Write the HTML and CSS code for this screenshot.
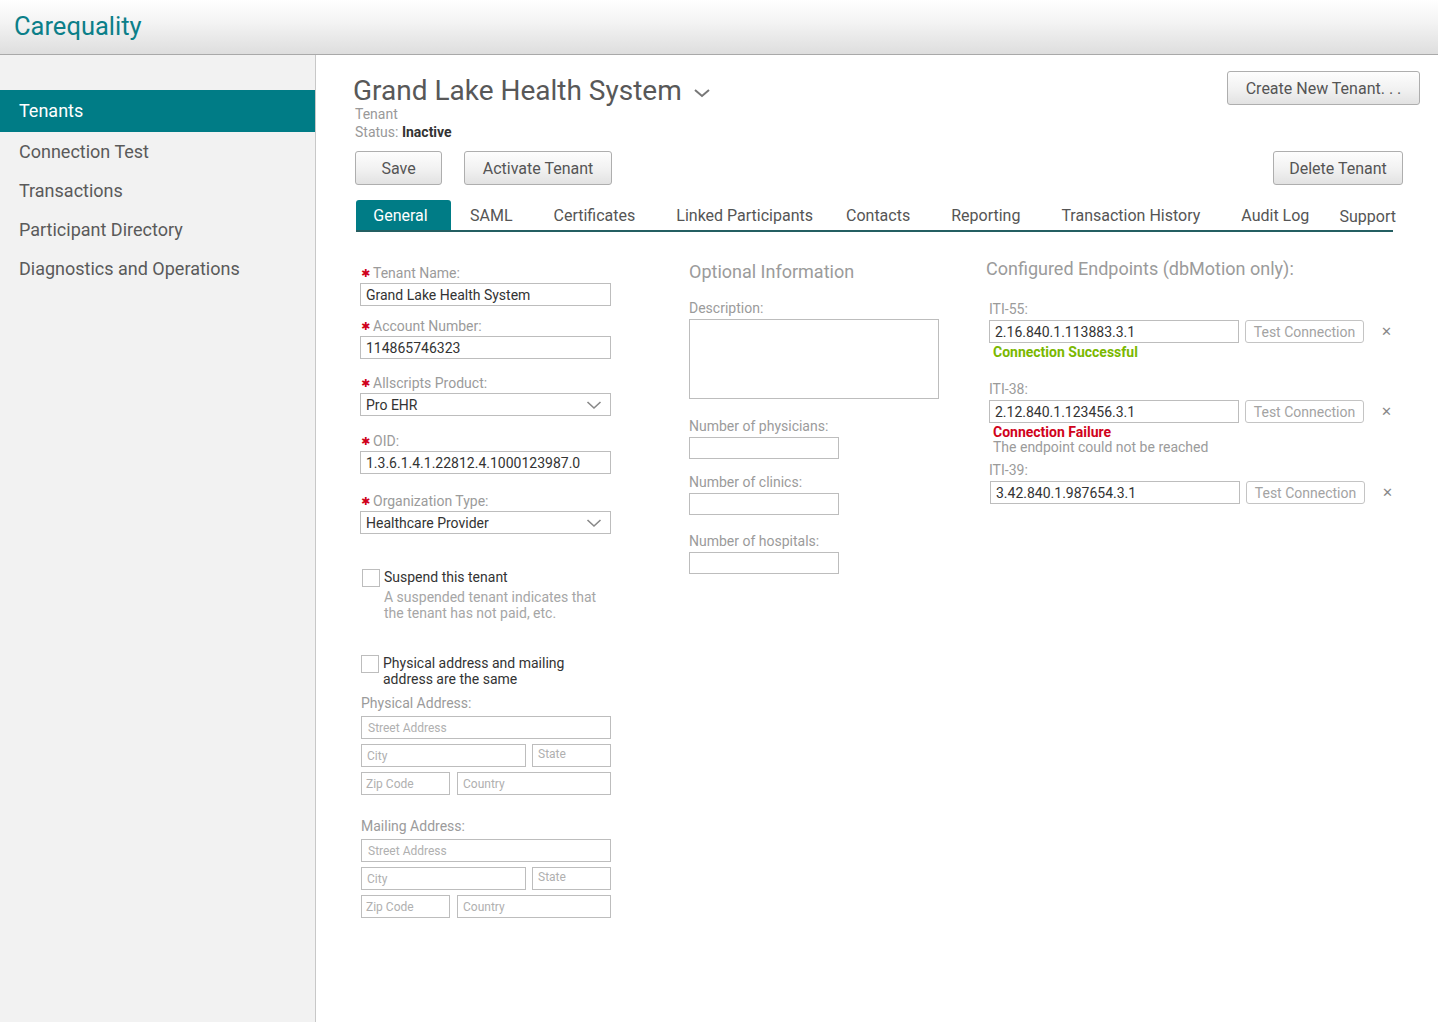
FILE: index.html
```html
<!DOCTYPE html>
<html>
<head>
<meta charset="utf-8">
<title>Carequality</title>
<link rel="stylesheet" href="styles.css">
</head>
<body>
<header class="topbar">
  <div class="brand">Carequality</div>
</header>
<div class="layout">
  <nav class="sidebar">
    <a class="nav-item active">Tenants</a>
    <a class="nav-item">Connection Test</a>
    <a class="nav-item">Transactions</a>
    <a class="nav-item">Participant Directory</a>
    <a class="nav-item">Diagnostics and Operations</a>
  </nav>
  <main class="main">
    <div class="title-row">
      <div class="title-block">
        <h1 class="page-title">Grand Lake Health System
          <svg class="title-chev" width="18" height="12" viewBox="0 0 18 12"><path d="M2 3 L9 9 L16 3" fill="none" stroke="#777" stroke-width="2"/></svg>
        </h1>
        <div class="subtitle">Tenant</div>
        <div class="status">Status: <b>Inactive</b></div>
      </div>
      <button class="btn btn-create">Create New Tenant. . .</button>
    </div>
    <div class="action-row">
      <button class="btn btn-save">Save</button>
      <button class="btn btn-activate">Activate Tenant</button>
      <button class="btn btn-delete">Delete Tenant</button>
    </div>
    <div class="tabs">
      <span class="tab active">General</span>
      <span class="tab">SAML</span>
      <span class="tab">Certificates</span>
      <span class="tab">Linked Participants</span>
      <span class="tab tab-contacts">Contacts</span>
      <span class="tab">Reporting</span>
      <span class="tab">Transaction History</span>
      <span class="tab">Audit Log</span>
      <span class="tab tab-support">Support</span>
    </div>
    <div class="form-area">
      <section class="col col-general">
        <div class="field f1">
          <label class="lbl"><span class="req">✱</span>Tenant Name:</label>
          <div class="input">Grand Lake Health System</div>
        </div>
        <div class="field f2">
          <label class="lbl"><span class="req">✱</span>Account Number:</label>
          <div class="input">114865746323</div>
        </div>
        <div class="field f3">
          <label class="lbl"><span class="req">✱</span>Allscripts Product:</label>
          <div class="input select">Pro EHR
            <svg class="sel-chev" width="16" height="10" viewBox="0 0 16 10"><path d="M1.5 2 L8 8 L14.5 2" fill="none" stroke="#888" stroke-width="1.6"/></svg>
          </div>
        </div>
        <div class="field f4">
          <label class="lbl"><span class="req">✱</span>OID:</label>
          <div class="input">1.3.6.1.4.1.22812.4.1000123987.0</div>
        </div>
        <div class="field f5">
          <label class="lbl"><span class="req">✱</span>Organization Type:</label>
          <div class="input select">Healthcare Provider
            <svg class="sel-chev" width="16" height="10" viewBox="0 0 16 10"><path d="M1.5 2 L8 8 L14.5 2" fill="none" stroke="#888" stroke-width="1.6"/></svg>
          </div>
        </div>

        <div class="check-row check-suspend">
          <span class="checkbox"></span>
          <div class="check-text">
            <div class="check-label">Suspend this tenant</div>
            <div class="check-desc">A suspended tenant indicates that the tenant has not paid, etc.</div>
          </div>
        </div>

        <div class="check-row check-same">
          <span class="checkbox"></span>
          <div class="check-text">
            <div class="check-label">Physical address and mailing address are the same</div>
          </div>
        </div>

        <div class="addr-group">
          <div class="addr-title">Physical Address:</div>
          <div class="addr-input full">Street Address</div>
          <div class="addr-line">
            <div class="addr-input city">City</div>
            <div class="addr-input state">State</div>
          </div>
          <div class="addr-line">
            <div class="addr-input zip">Zip Code</div>
            <div class="addr-input country">Country</div>
          </div>
        </div>

        <div class="addr-group mailing">
          <div class="addr-title">Mailing Address:</div>
          <div class="addr-input full">Street Address</div>
          <div class="addr-line">
            <div class="addr-input city">City</div>
            <div class="addr-input state">State</div>
          </div>
          <div class="addr-line">
            <div class="addr-input zip">Zip Code</div>
            <div class="addr-input country">Country</div>
          </div>
        </div>
      </section>

      <section class="col col-optional">
        <h2 class="col-heading">Optional Information</h2>
        <label class="opt-lbl desc-lbl">Description:</label>
        <div class="textarea"></div>
        <label class="opt-lbl phys-lbl">Number of physicians:</label>
        <div class="small-input"></div>
        <label class="opt-lbl clin-lbl">Number of clinics:</label>
        <div class="small-input"></div>
        <label class="opt-lbl hosp-lbl">Number of hospitals:</label>
        <div class="small-input"></div>
      </section>

      <section class="col col-endpoints">
        <h2 class="col-heading ep-heading">Configured Endpoints (dbMotion only):</h2>
        <div class="endpoint ep1">
          <label class="ep-lbl">ITI-55:</label>
          <div class="ep-row">
            <div class="ep-input">2.16.840.1.113883.3.1</div>
            <button class="test-btn">Test Connection</button>
            <span class="remove">✕</span>
          </div>
          <div class="ep-ok">Connection Successful</div>
        </div>
        <div class="endpoint ep2">
          <label class="ep-lbl">ITI-38:</label>
          <div class="ep-row">
            <div class="ep-input">2.12.840.1.123456.3.1</div>
            <button class="test-btn">Test Connection</button>
            <span class="remove">✕</span>
          </div>
          <div class="ep-fail">Connection Failure</div>
          <div class="ep-fail-desc">The endpoint could not be reached</div>
        </div>
        <div class="endpoint ep3">
          <label class="ep-lbl">ITI-39:</label>
          <div class="ep-row">
            <div class="ep-input">3.42.840.1.987654.3.1</div>
            <button class="test-btn">Test Connection</button>
            <span class="remove">✕</span>
          </div>
        </div>
      </section>
    </div>
  </main>
</div>
</body>
</html>
```
FILE: styles.css
```css
* { box-sizing: border-box; }
html, body { margin: 0; padding: 0; }
body {
  font-family: Roboto, "Liberation Sans", Arial, sans-serif;
  color: #555;
  background: #fff;
  width: 1438px;
  height: 1022px;
  overflow: hidden;
}

.topbar {
  height: 55px;
  border-bottom: 1px solid #a9a9a9;
  background: linear-gradient(to bottom, #ffffff 0%, #f4f4f4 40%, #dedede 100%);
  display: flex;
  align-items: center;
  padding-left: 14px;
}
.brand {
  font-size: 25.5px;
  color: #0b7f89;
  margin-top: -2px;
}

.layout {
  display: flex;
  height: 967px;
}

.sidebar {
  width: 316px;
  flex: 0 0 316px;
  background: #f2f2f2;
  border-right: 1px solid #c8c8c8;
  padding-top: 35px;
  display: flex;
  flex-direction: column;
}
.nav-item {
  display: flex;
  align-items: center;
  height: 39px;
  padding-left: 19px;
  font-size: 18px;
  color: #5a5a5a;
}
.nav-item.active {
  height: 42px;
  background: #007c86;
  color: #fff;
  padding-bottom: 2px;
}

.main {
  flex: 1;
  padding: 0 0 0 38px;
  position: relative;
}

.title-row {
  display: flex;
  justify-content: space-between;
  align-items: flex-start;
  padding-top: 21px;
}
.page-title {
  margin: 0;
  font-size: 28px;
  font-weight: 400;
  line-height: 29px;
  color: #585858;
  display: flex;
  align-items: center;
  margin-left: -1px;
}
.title-chev { margin-left: 11px; margin-top: 4px; }
.subtitle {
  font-size: 14px;
  line-height: 18px;
  color: #999;
  margin-left: 1px;
}
.status {
  font-size: 14px;
  line-height: 18px;
  color: #999;
  margin-left: 1px;
}
.status b { color: #333; font-weight: 700; }

.btn {
  font-family: Roboto, "Liberation Sans", Arial, sans-serif;
  font-size: 16px;
  color: #555;
  height: 34px;
  border: 1px solid #aeaeae;
  border-radius: 3px;
  background: linear-gradient(to bottom, #fdfdfd 0%, #f1f1f1 55%, #e2e2e2 100%);
  padding: 0;
}
.btn-create {
  width: 193px;
  margin-top: -5px;
  margin-right: 18px;
}
.action-row {
  display: flex;
  margin-top: 10px;
  margin-right: 35px;
}
.btn-save { width: 87px; margin-left: 1px; }
.btn-activate { width: 148px; margin-left: 22px; }
.btn-delete { width: 130px; margin-left: auto; }

.tabs {
  display: flex;
  align-items: flex-end;
  margin-top: 15px;
  margin-left: 2px;
  margin-right: 45px;
  border-bottom: 2px solid #245f62;
  height: 32px;
}
.tab {
  font-size: 16px;
  color: #555;
  padding: 0 20px 5px 21px;
  white-space: nowrap;
}
.tab-contacts { padding-left: 13px; }
.tab.active {
  background: #007c86;
  color: #fff;
  height: 30px;
  width: 95px;
  padding: 0 6px 0 0;
  display: flex;
  align-items: center;
  justify-content: center;
  border-radius: 3px 3px 0 0;
  margin-right: -2px;
}
.tab-support {
  margin-left: auto;
  padding: 0 0 4px 0;
  margin-right: -3px;
}

.form-area {
  display: flex;
  padding-top: 30px;
}
.col-general { width: 251px; margin-left: 6px; margin-top: 2px; }
.col-optional { width: 250px; margin-left: 78px; }
.col-endpoints { width: 420px; margin-left: 47px; }

.field { display: flex; flex-direction: column; }
.f2 { margin-top: 11px; }
.f3 { margin-top: 15px; }
.f4 { margin-top: 16px; }
.f5 { margin-top: 18px; }
.lbl {
  font-size: 14px;
  line-height: 18px;
  height: 18px;
  color: #9b9b9b;
  display: flex;
  align-items: center;
  margin-bottom: 1px;
}
.req {
  color: #d0021b;
  font-size: 11px;
  line-height: 10px;
  width: 13px;
  padding-left: 1px;
  font-family: "DejaVu Sans", sans-serif;
  margin-top: 2px;
}
.input {
  height: 23px;
  border: 1px solid #bdbdbd;
  font-size: 14px;
  color: #333;
  padding-left: 5px;
  display: flex;
  align-items: center;
  position: relative;
}
.select .sel-chev {
  position: absolute;
  right: 8px;
  top: 6px;
}

.check-row {
  display: flex;
  align-items: flex-start;
}
.check-suspend { margin-top: 35px; margin-left: 2px; }
.check-same { margin-top: 34px; margin-left: 1px; }
.checkbox {
  width: 18px;
  height: 18px;
  border: 1px solid #bdbdbd;
  background: #fff;
  flex: 0 0 18px;
}
.check-text { margin-left: 4px; margin-top: 0; }
.check-label {
  font-size: 14px;
  line-height: 16px;
  color: #333;
}
.check-desc {
  font-size: 14px;
  line-height: 16px;
  color: #a6a6a6;
  margin-top: 4px;
  width: 225px;
}

.addr-group { margin-top: 7px; margin-left: 1px; }
.addr-group.mailing { margin-top: 22px; }
.addr-title {
  font-size: 14px;
  line-height: 18px;
  color: #9b9b9b;
  margin-bottom: 4px;
}
.addr-input {
  height: 23px;
  border: 1px solid #bdbdbd;
  font-size: 12px;
  color: #b0b0b0;
  padding-left: 6px;
  display: flex;
  align-items: center;
}
.addr-input.full { width: 250px; }
.addr-line { display: flex; margin-top: 5px; width: 250px; }
.addr-input.city { width: 165px; padding-left: 5px; }
.addr-input.state { width: 79px; margin-left: 6px; padding-left: 5px; align-items: flex-start; padding-top: 2px; }
.addr-input.zip { width: 89px; padding-left: 4px; }
.addr-input.country { width: 154px; margin-left: 7px; padding-left: 5px; }

.col-heading {
  margin: 0;
  font-size: 18px;
  font-weight: 400;
  line-height: 22px;
  color: #9b9b9b;
}
.col-optional .col-heading { margin-top: -1px; }
.opt-lbl {
  display: block;
  font-size: 14px;
  line-height: 18px;
  color: #9b9b9b;
}
.desc-lbl { margin-top: 16px; margin-bottom: 2px; }
.textarea {
  width: 250px;
  height: 80px;
  border: 1px solid #bdbdbd;
}
.phys-lbl { margin-top: 18px; margin-bottom: 2px; }
.clin-lbl { margin-top: 14px; margin-bottom: 2px; }
.hosp-lbl { margin-top: 17px; margin-bottom: 2px; }
.small-input {
  width: 150px;
  height: 22px;
  border: 1px solid #bdbdbd;
}

.ep-heading { margin-top: -4px; }
.endpoint { margin-left: 3px; }
.ep1 { margin-top: 20px; }
.ep2 { margin-top: 20px; }
.ep3 { margin-top: 6px; margin-left: 3px; }
.ep-lbl {
  display: block;
  font-size: 14px;
  line-height: 18px;
  color: #9b9b9b;
  margin-bottom: 2px;
}
.ep-row { display: flex; align-items: center; }
.ep-input {
  width: 250px;
  height: 23px;
  border: 1px solid #bdbdbd;
  font-size: 14px;
  color: #333;
  padding-left: 5px;
  display: flex;
  align-items: center;
}
.ep3 .ep-input { margin-left: 1px; }
.test-btn {
  font-family: Roboto, "Liberation Sans", Arial, sans-serif;
  margin-left: 6px;
  width: 119px;
  height: 23px;
  border: 1px solid #c4c4c4;
  border-radius: 3px;
  background: #fff;
  font-size: 14px;
  color: #a3a3a3;
  padding: 0;
}
.remove {
  margin-left: 17px;
  font-size: 13px;
  color: #888;
  font-family: "DejaVu Sans", sans-serif;
}
.ep-ok {
  font-size: 14px;
  font-weight: 700;
  line-height: 16px;
  color: #7ab800;
  margin-left: 4px;
  margin-top: 1px;
}
.ep-fail {
  font-size: 14px;
  font-weight: 700;
  line-height: 14px;
  color: #d0021b;
  margin-left: 4px;
  margin-top: 2px;
}
.ep-fail-desc {
  font-size: 14px;
  line-height: 16px;
  color: #9b9b9b;
  margin-left: 4px;
}
```
